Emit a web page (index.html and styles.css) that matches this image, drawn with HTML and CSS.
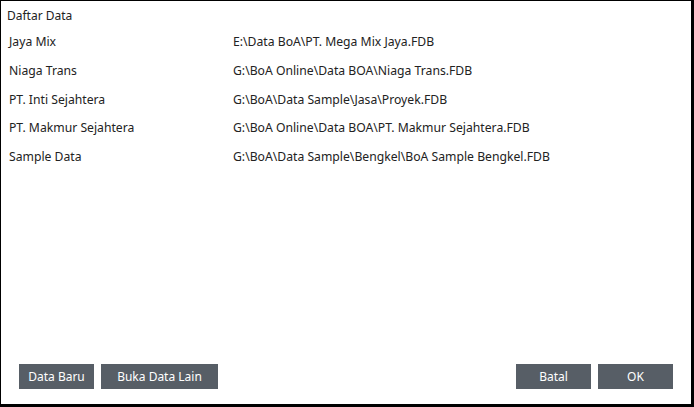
FILE: index.html
```html
<!DOCTYPE html>
<html>
<head>
<meta charset="utf-8">
<link rel="stylesheet" href="styles.css">
</head>
<body>
<div class="dialog">
  <div class="title">Daftar Data</div>
  <div class="list">
    <div class="row"><span class="name">Jaya Mix</span><span class="path">E:\Data BoA\PT. Mega Mix Jaya.FDB</span></div>
    <div class="row"><span class="name">Niaga Trans</span><span class="path">G:\BoA Online\Data BOA\Niaga Trans.FDB</span></div>
    <div class="row"><span class="name">PT. Inti Sejahtera</span><span class="path">G:\BoA\Data Sample\Jasa\Proyek.FDB</span></div>
    <div class="row"><span class="name">PT. Makmur Sejahtera</span><span class="path">G:\BoA Online\Data BOA\PT. Makmur Sejahtera.FDB</span></div>
    <div class="row"><span class="name">Sample Data</span><span class="path">G:\BoA\Data Sample\Bengkel\BoA Sample Bengkel.FDB</span></div>
  </div>
  <div class="footer">
    <div class="group">
      <button class="btn w75">Data Baru</button>
      <button class="btn w117">Buka Data Lain</button>
    </div>
    <div class="group">
      <button class="btn w75">Batal</button>
      <button class="btn w75">OK</button>
    </div>
  </div>
</div>
</body>
</html>
```
FILE: styles.css
```css
html, body {
  margin: 0;
  padding: 0;
  background: #000;
}
.dialog {
  box-sizing: border-box;
  width: 694px;
  height: 407px;
  border-style: solid;
  border-color: #000;
  border-width: 1px 3px 3px 1px;
  background: #fff;
  font-family: "Noto Sans", "Open Sans", sans-serif;
  font-size: 12px;
  color: #222;
  display: flex;
  flex-direction: column;
}
.title {
  padding: 5px 0 0 6px;
  height: 20px;
  line-height: 20px;
}
.list {
  flex: 1;
  padding-top: 2px;
  font-size: 12.2px;
}
.row {
  display: flex;
  height: 28.75px;
  line-height: 28.75px;
  padding-left: 8px;
}
.name {
  width: 224px;
}
.footer {
  display: flex;
  justify-content: space-between;
  padding: 0 18px 15px 18px;
}
.group {
  display: flex;
  gap: 7px;
}
.btn {
  height: 25px;
  border: none;
  background: #575e66;
  color: #fff;
  font-family: inherit;
  font-size: 12px;
  padding: 0;
}
.w75 { width: 75px; }
.w117 { width: 117px; }
```
